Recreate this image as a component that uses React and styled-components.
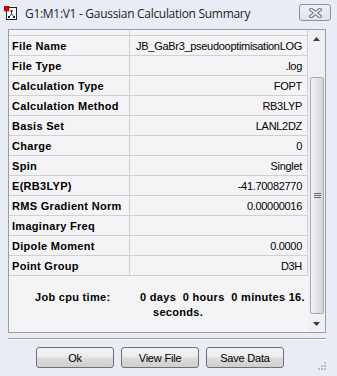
import React from "react";
import styled, { createGlobalStyle } from "styled-components";

const GlobalStyle = createGlobalStyle`
  html, body { margin: 0; padding: 0; }
  body {
    background: #e8ecf5;
    overflow: hidden;
    font-family: "Liberation Sans", Arial, sans-serif;
  }
`;

const Window = styled.div`
  position: relative;
  width: 337px;
  height: 376px;
  display: flex;
  flex-direction: column;
  background: #e8ecf5;
`;

const TitleBar = styled.div`
  height: 25px;
  display: flex;
  align-items: center;
  padding: 0 6px 0 4px;
`;

const TitleText = styled.div`
  margin-left: 7px;
  margin-top: 1px;
  font-family: "Open Sans", "Noto Sans", sans-serif;
  font-size: 12px;
  letter-spacing: -0.3px;
  color: #1e1e1e;
  white-space: nowrap;
`;

const CloseButton = styled.div`
  margin-left: auto;
  width: 30px;
  height: 15px;
  border: 1px solid #8c8f96;
  border-radius: 3px;
  background: linear-gradient(#eef0f5, #dfe3ec);
  display: flex;
  align-items: center;
  justify-content: center;
`;

const Panel = styled.div`
  margin: 4px 11px 0 8px;
  height: 302px;
  border: 1px solid #9c9c9c;
  background: #f4f4f7;
  display: flex;
`;

const GridArea = styled.div`
  flex: 1;
  display: flex;
  flex-direction: column;
`;

const Row = styled.div`
  display: flex;
  height: ${(p) => p.$h}px;
  border-bottom: 1px solid #cfcfd4;
  border-right: 1px solid #cfcfd4;
`;

const LabelCell = styled.div`
  width: 117px;
  padding-left: 3px;
  border-right: 1px solid #cfcfd4;
  font-size: 11px;
  font-weight: bold;
  letter-spacing: 0.3px;
  color: #000;
  display: flex;
  align-items: center;
  white-space: nowrap;
`;

const ValueCell = styled.div`
  flex: 1;
  padding-right: 5px;
  font-size: 11px;
  letter-spacing: -0.3px;
  color: #000;
  display: flex;
  align-items: center;
  justify-content: flex-end;
  white-space: nowrap;
`;

const CpuBlock = styled.div`
  display: flex;
  padding: 14px 0 0 26px;
  font-size: 11px;
  font-weight: bold;
  letter-spacing: 0.3px;
  line-height: 15px;
  color: #000;
`;

const CpuLabel = styled.div`
  width: 105px;
  flex: none;
`;

const CpuLines = styled.div`
  white-space: pre;
`;

const CpuIndent = styled.div`
  padding-left: 13px;
`;

const Scrollbar = styled.div`
  width: 17px;
  display: flex;
  flex-direction: column;
  background: #eef0f4;
`;

const ArrowButton = styled.div`
  height: 17px;
  display: flex;
  align-items: center;
  justify-content: center;
`;

const Track = styled.div`
  flex: 1;
  display: flex;
  flex-direction: column;
`;

const Thumb = styled.div`
  margin: 30px 1px 0 2px;
  height: 235px;
  border: 1px solid #a9a9ad;
  border-radius: 2px;
  background: linear-gradient(to right, #f3f3f5, #e4e4e7 45%, #d3d3d7);
  display: flex;
  align-items: center;
  justify-content: center;
`;

const Separator = styled.div`
  margin: 5px 11px 0 8px;
  height: 1px;
  background: #a0a0a0;
  border-bottom: 1px solid #ffffff;
`;

const ButtonRow = styled.div`
  display: flex;
  gap: 7px;
  padding: 7px 0 0 36px;
`;

const Button = styled.div`
  width: 76px;
  height: 19px;
  border: 1px solid #707070;
  border-radius: 3px;
  background: linear-gradient(#f4f4f4 0%, #ebebeb 48%, #dcdcdc 52%, #cfcfcf 100%);
  font-size: 11px;
  letter-spacing: -0.2px;
  color: #000;
  display: flex;
  align-items: center;
  justify-content: center;
`;

const Grip = styled.svg`
  position: absolute;
  right: 11px;
  bottom: 6px;
`;

const rows = [
  ["File Name", "JB_GaBr3_pseudooptimisationLOG"],
  ["File Type", ".log"],
  ["Calculation Type", "FOPT"],
  ["Calculation Method", "RB3LYP"],
  ["Basis Set", "LANL2DZ"],
  ["Charge", "0"],
  ["Spin", "Singlet"],
  ["E(RB3LYP)", "-41.70082770"],
  ["RMS Gradient Norm", "0.00000016"],
  ["Imaginary Freq", ""],
  ["Dipole Moment", "0.0000"],
  ["Point Group", "D3H"],
];

function AppIcon() {
  return (
    <svg width="14" height="14" viewBox="0 0 14 14">
      <rect x="2.5" y="1.5" width="10" height="12" fill="#fff" stroke="#222" />
      <line x1="7.5" y1="5" x2="7.5" y2="8" stroke="#444" />
      <line x1="7.5" y1="8" x2="5" y2="11" stroke="#444" />
      <line x1="7.5" y1="8" x2="10" y2="11" stroke="#444" />
      <rect x="6.5" y="4" width="2" height="2" fill="#222" />
      <rect x="4" y="10" width="2" height="2" fill="#222" />
      <rect x="9" y="10" width="2" height="2" fill="#222" />
      <rect x="0" y="0" width="5" height="5" fill="#e00000" stroke="#600" strokeWidth="0.5" />
    </svg>
  );
}

function CloseGlyph() {
  return (
    <svg width="13" height="10" viewBox="0 0 13 10">
      <path d="M2 1.5 L11 8.5 M11 1.5 L2 8.5" stroke="#6b6e75" strokeWidth="3.6" strokeLinecap="square" />
      <path d="M2 1.5 L11 8.5 M11 1.5 L2 8.5" stroke="#f2f3f6" strokeWidth="1.6" strokeLinecap="square" />
    </svg>
  );
}

function Arrow({ up }) {
  return (
    <svg width="7" height="4" viewBox="0 0 7 4">
      <path d={up ? "M0 4 L3.5 0 L7 4 Z" : "M0 0 L7 0 L3.5 4 Z"} fill="#3a3a3a" />
    </svg>
  );
}

export default function App() {
  return (
    <>
      <GlobalStyle />
      <Window>
        <TitleBar>
          <AppIcon />
          <TitleText>G1:M1:V1 - Gaussian Calculation Summary</TitleText>
          <CloseButton>
            <CloseGlyph />
          </CloseButton>
        </TitleBar>
        <Panel>
          <GridArea>
            <Row $h={5}>
              <LabelCell />
              <ValueCell />
            </Row>
            {rows.map(([label, value]) => (
              <Row key={label} $h={19}>
                <LabelCell>{label}</LabelCell>
                <ValueCell>{value}</ValueCell>
              </Row>
            ))}
            <CpuBlock>
              <CpuLabel>Job cpu time:</CpuLabel>
              <CpuLines>
                <div>{"0 days  0 hours  0 minutes 16."}</div>
                <CpuIndent>seconds.</CpuIndent>
              </CpuLines>
            </CpuBlock>
          </GridArea>
          <Scrollbar>
            <ArrowButton>
              <Arrow up />
            </ArrowButton>
            <Track>
              <Thumb>
                <svg width="7" height="6" viewBox="0 0 7 6">
                  <path d="M0 0.5 H7 M0 2.5 H7 M0 4.5 H7" stroke="#6a6a6a" />
                </svg>
              </Thumb>
            </Track>
            <ArrowButton>
              <Arrow />
            </ArrowButton>
          </Scrollbar>
        </Panel>
        <Separator />
        <ButtonRow>
          <Button>Ok</Button>
          <Button>View File</Button>
          <Button>Save Data</Button>
        </ButtonRow>
        <Grip width="8" height="8" viewBox="0 0 8 8">
          <g fill="#b8bcc6">
            <rect x="6" y="0" width="2" height="2" />
            <rect x="3" y="3" width="2" height="2" />
            <rect x="6" y="3" width="2" height="2" />
            <rect x="0" y="6" width="2" height="2" />
            <rect x="3" y="6" width="2" height="2" />
            <rect x="6" y="6" width="2" height="2" />
          </g>
        </Grip>
      </Window>
    </>
  );
}
